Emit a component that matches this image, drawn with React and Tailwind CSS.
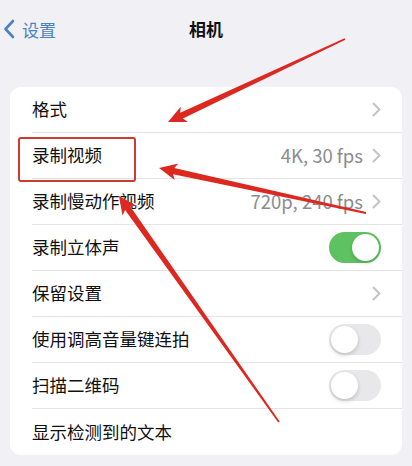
import React from 'react';

const font = { fontFamily: '"Noto Sans CJK SC", "Noto Sans", sans-serif' };

function Chevron() {
  return (
    <svg width="9" height="15" viewBox="0 0 9 15" className="shrink-0">
      <path d="M1.5 1.5 L7.5 7.5 L1.5 13.5" fill="none" stroke="#c4c4c8" strokeWidth="2" strokeLinecap="round" strokeLinejoin="round" />
    </svg>
  );
}

function Toggle({ on }) {
  return (
    <div
      className={`w-[52px] h-[31px] rounded-full p-[2px] flex ${
        on ? 'bg-[#5fc262] justify-end' : 'bg-[#e8e8ea] justify-start'
      }`}
    >
      <div className="w-[27px] h-[27px] rounded-full bg-white shadow-[0_2px_4px_rgba(0,0,0,0.18)]" />
    </div>
  );
}

const rows = [
  { label: '格式', chevron: true },
  { label: '录制视频', value: '4K, 30 fps', chevron: true },
  { label: '录制慢动作视频', value: '720p, 240 fps', chevron: true },
  { label: '录制立体声', toggle: true, on: true },
  { label: '保留设置', chevron: true },
  { label: '使用调高音量键连拍', toggle: true, on: false },
  { label: '扫描二维码', toggle: true, on: false },
  { label: '显示检测到的文本' },
];

// tapered arrow polygon from tail to tip
function arrowPoints(tx, ty, px, py) {
  const dx = px - tx;
  const dy = py - ty;
  const len = Math.hypot(dx, dy);
  const ux = dx / len;
  const uy = dy / len;
  const nx = -uy;
  const ny = ux;
  const headLen = 18;
  const headW = 8.5;
  const bx = px - ux * headLen;
  const by = py - uy * headLen;
  const tailW = 0.9;
  const neckW = 3.2;
  const pts = [
    [tx + nx * tailW, ty + ny * tailW],
    [bx + ux * 3 + nx * neckW, by + uy * 3 + ny * neckW],
    [bx + nx * headW, by + ny * headW],
    [px, py],
    [bx - nx * headW, by - ny * headW],
    [bx + ux * 3 - nx * neckW, by + uy * 3 - ny * neckW],
    [tx - nx * tailW, ty - ny * tailW],
  ];
  return pts.map((p) => p.map((v) => v.toFixed(1)).join(',')).join(' ');
}

const arrows = [
  [345, 39, 168, 122],
  [366, 213, 159, 168],
  [279, 422, 119, 196],
];

export default function App() {
  return (
    <div className="relative w-[412px] h-[466px] overflow-hidden bg-[#f0f0f5]" style={font}>
      {/* nav bar */}
      <div className="relative h-[57px] flex items-center justify-center">
        <div className="absolute left-[3px] top-[19px] flex items-center gap-[7px] text-[#4a82c4]">
          <svg width="12" height="20" viewBox="0 0 12 20">
            <path d="M10 2 L2.5 10 L10 18" fill="none" stroke="#4a82c4" strokeWidth="2.6" strokeLinecap="round" strokeLinejoin="round" />
          </svg>
          <span className="text-[17px] leading-none">设置</span>
        </div>
        <h1 className="text-[17px] font-bold text-[#111] leading-none">相机</h1>
      </div>

      {/* settings card */}
      <div className="mt-[30px] mx-[10px] bg-white rounded-[11px] overflow-hidden">
        {rows.map((r, i) => (
          <div key={r.label} className="pl-[22px] h-[46px]">
            <div
              className={`h-full flex items-center pr-[21px] ${
                i < rows.length - 1 ? 'border-b border-[#e4e4e6]' : ''
              }`}
            >
              <span className="text-[17.5px] text-[#111] flex-1">{r.label}</span>
              {r.value && <span className="text-[18.5px] text-[#8c8c90] mr-[9px]">{r.value}</span>}
              {r.chevron && <Chevron />}
              {r.toggle && <Toggle on={r.on} />}
            </div>
          </div>
        ))}
      </div>

      {/* red annotation box */}
      <div className="absolute left-[18px] top-[137px] w-[118px] h-[45px] border-[2.5px] border-[#cf3a2f] rounded-[3px] pointer-events-none" />

      {/* red annotation arrows */}
      <svg className="absolute inset-0 pointer-events-none" width="412" height="466" viewBox="0 0 412 466">
        {arrows.map((a, i) => (
          <polygon key={i} points={arrowPoints(...a)} fill="#dd2820" />
        ))}
      </svg>
    </div>
  );
}
